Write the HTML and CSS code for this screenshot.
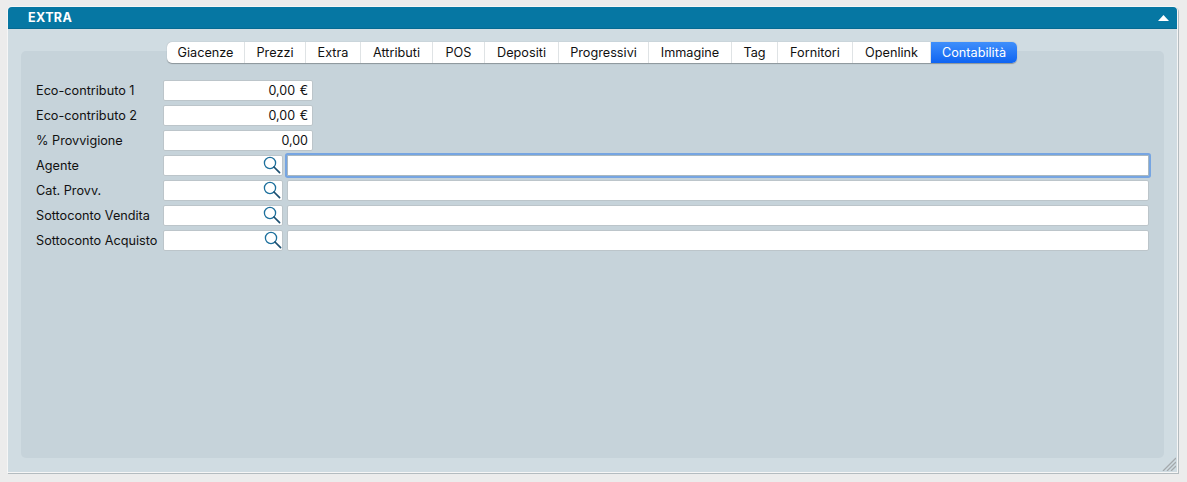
FILE: index.html
```html
<!DOCTYPE html>
<html lang="it">
<head>
<meta charset="utf-8">
<title>Extra</title>
<link rel="stylesheet" href="styles.css">
</head>
<body>
<section class="panel">
  <header class="panel-head">
    <span class="panel-title">EXTRA</span>
    <svg class="collapse" width="11" height="6" viewBox="0 0 11 6"><path d="M5.5 0 L11 6 H0 Z" fill="#fff"/></svg>
  </header>
  <div class="panel-body">
    <div class="inner">
      <nav class="tabs">
        <span class="tab t1">Giacenze</span>
        <span class="tab t2">Prezzi</span>
        <span class="tab t3">Extra</span>
        <span class="tab t4">Attributi</span>
        <span class="tab t5">POS</span>
        <span class="tab t6">Depositi</span>
        <span class="tab t7">Progressivi</span>
        <span class="tab t8">Immagine</span>
        <span class="tab t9">Tag</span>
        <span class="tab t10">Fornitori</span>
        <span class="tab t11">Openlink</span>
        <span class="tab t12 active">Contabilità</span>
      </nav>
      <div class="form">
        <div class="row"><label class="lbl">Eco-contributo 1</label><div class="field num">0,00 €</div></div>
        <div class="row"><label class="lbl">Eco-contributo 2</label><div class="field num">0,00 €</div></div>
        <div class="row"><label class="lbl">% Provvigione</label><div class="field num">0,00</div></div>
        <div class="row"><label class="lbl">Agente</label>
          <div class="field lookup"><svg class="lens" width="18" height="18" viewBox="0 0 18 18"><circle cx="7" cy="7" r="5.6" fill="none" stroke="#1c6f9c" stroke-width="1.3"/><path d="M11 11 L16.6 16.6" stroke="#1c4f70" stroke-width="1.7" stroke-linecap="round"/></svg></div>
          <div class="field wide focus"></div></div>
        <div class="row"><label class="lbl">Cat. Provv.</label>
          <div class="field lookup"><svg class="lens" width="18" height="18" viewBox="0 0 18 18"><circle cx="7" cy="7" r="5.6" fill="none" stroke="#1c6f9c" stroke-width="1.3"/><path d="M11 11 L16.6 16.6" stroke="#1c4f70" stroke-width="1.7" stroke-linecap="round"/></svg></div>
          <div class="field wide"></div></div>
        <div class="row"><label class="lbl">Sottoconto Vendita</label>
          <div class="field lookup"><svg class="lens" width="18" height="18" viewBox="0 0 18 18"><circle cx="7" cy="7" r="5.6" fill="none" stroke="#1c6f9c" stroke-width="1.3"/><path d="M11 11 L16.6 16.6" stroke="#1c4f70" stroke-width="1.7" stroke-linecap="round"/></svg></div>
          <div class="field wide"></div></div>
        <div class="row"><label class="lbl">Sottoconto Acquisto</label>
          <div class="field lookup last"><svg class="lens" width="18" height="18" viewBox="0 0 18 18"><circle cx="7" cy="7" r="5.6" fill="none" stroke="#1c6f9c" stroke-width="1.3"/><path d="M11 11 L16.6 16.6" stroke="#1c4f70" stroke-width="1.7" stroke-linecap="round"/></svg></div>
          <div class="field wide"></div></div>
      </div>
    </div>
  </div>
  <svg class="grip" width="14" height="14" viewBox="0 0 14 14"><path d="M1 14 L14 1 M5 14 L14 5 M9 14 L14 9" stroke="#a4a9ac" stroke-width="1.3"/></svg>
</section>
</body>
</html>
```
FILE: styles.css
```css
* { box-sizing: border-box; }
html, body { margin: 0; height: 482px; overflow: hidden; }
body {
  background: #ececec;
  font-family: Inter, "Liberation Sans", sans-serif;
  font-size: 12.5px;
  color: #111;
  padding: 7px 10px 10px 8px;
}
.panel {
  position: relative;
  height: 465px;
  display: flex;
  flex-direction: column;
  border-radius: 4px 4px 0 0;
  box-shadow: 0 0 0 1px #f6f6f6, 1px 1px 0 1px #b4bcc0;
  background: #d0dce2;
}
.panel-head {
  height: 22px;
  background: #0677a3;
  border-bottom: 1px solid #056a92;
  border-radius: 4px 4px 0 0;
  display: flex;
  align-items: center;
  justify-content: space-between;
  padding: 0 8px 0 20px;
  flex: none;
}
.panel-title { color: #fff; font-weight: 700; font-size: 12.5px; letter-spacing: 0.4px; }
.collapse { display: block; margin-top: 1px; }
.panel-body { flex: 1; padding: 22px 13px 14px 13px; display: flex; }
.inner {
  flex: 1;
  position: relative;
  background: #c6d3da;
  border-radius: 5px;
  padding-top: 29px;
}
.tabs {
  position: absolute;
  top: -9px;
  left: 146px;
  display: flex;
  height: 21px;
  background: #fff;
  border-radius: 5px;
  box-shadow: 0 0.5px 1px rgba(0,0,0,.3);
}
.tab {
  display: flex;
  align-items: center;
  justify-content: center;
  border-right: 1px solid #dfe3e5;
  font-size: 12.7px;
  color: #111;
}
.t1 { width: 78px; } .t2 { width: 61px; } .t3 { width: 55px; } .t4 { width: 72px; }
.t5 { width: 52px; } .t6 { width: 74px; } .t7 { width: 90px; } .t8 { width: 83px; }
.t9 { width: 46px; } .t10 { width: 75px; } .t11 { width: 78px; }
.t12 { width: 86px; }
.tab.active {
  background: linear-gradient(#3f8ffb, #0f64f2);
  color: #fff;
  border-right: 0;
  border-radius: 0 5px 5px 0;
}
.form { display: flex; flex-direction: column; gap: 4px; padding-left: 15px; }
.row { display: flex; align-items: center; height: 21px; }
.lbl { width: 127px; flex: none; white-space: nowrap; font-size: 12.7px; }
.field {
  height: 21px;
  background: #fff;
  border: 1px solid #bcc5ca;
  border-radius: 2px;
  flex: none;
}
.num {
  width: 150px;
  text-align: right;
  padding-right: 4px;
  line-height: 19px;
  font-size: 12.5px;
  word-spacing: 1px;
}
.lookup { width: 120px; position: relative; }
.lens { position: absolute; right: 1px; top: 0; }
.last .lens { right: 0; }
.wide { width: 862px; margin-left: 4px; }
.focus {
  border: 1px solid #a9b8c0;
  box-shadow: 0 0 0 2px #76a5e2;
  border-radius: 1px;
}
.grip { position: absolute; right: 1px; bottom: 1px; }
```
